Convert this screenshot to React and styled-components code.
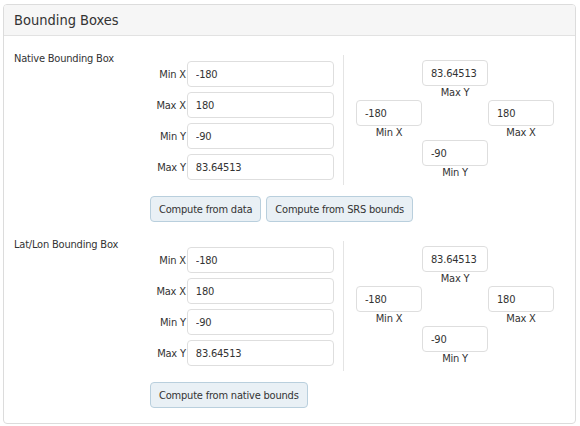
import React from "react";
import styled, { createGlobalStyle } from "styled-components";

const Global = createGlobalStyle`
  body {
    margin: 0;
    background: #fff;
    font-family: Tahoma, "DejaVu Sans Condensed", "DejaVu Sans", sans-serif;
    font-size: 11px;
    letter-spacing: -0.2px;
    color: #333;
  }
`;

const Panel = styled.div`
  margin: 4px 4px 0 3px;
  border: 1px solid #dcdcdc;
  border-radius: 4px;
  overflow: hidden;
`;

const Heading = styled.div`
  height: 30px;
  display: flex;
  align-items: center;
  padding: 0 10px;
  background: #f6f6f6;
  border-bottom: 1px solid #e2e2e2;
  font-size: 14.5px;
  letter-spacing: 0;
  color: #333;
`;

const Body = styled.div`
  padding: 16px 10px 15px 10px;
  display: flex;
  flex-direction: column;
  gap: 16px;
`;

const Section = styled.div`
  display: grid;
  grid-template-columns: 136px 1fr;
`;

const SectionTitle = styled.div`
  line-height: 14px;
`;

const Content = styled.div`
  padding-top: 3px;
`;

const Row = styled.div`
  display: flex;
  align-items: stretch;
`;

const Fields = styled.div`
  width: 184px;
  padding: 6px 0 5px;
  display: flex;
  flex-direction: column;
  gap: 5px;
`;

const Field = styled.label`
  display: flex;
  align-items: center;
  span {
    width: 36px;
    text-align: right;
    padding-right: 1px;
  }
`;

const Input = styled.input`
  box-sizing: border-box;
  height: 26px;
  width: ${(p) => p.$w || 148}px;
  border: 1px solid #dedede;
  border-radius: 4px;
  padding: 0 8px;
  font: inherit;
  letter-spacing: inherit;
  color: #333;
  outline: none;
`;

const Divider = styled.div`
  width: 1px;
  background: #e4e4e4;
  margin: 0 12px 0 9px;
`;

const Compass = styled.div`
  padding-top: 5px;
  display: grid;
  grid-template-columns: repeat(3, 66px);
  grid-template-rows: repeat(3, 40px);
  grid-template-areas:
    ". top ."
    "left . right"
    ". bottom .";
`;

const Cell = styled.div`
  grid-area: ${(p) => p.$area};
  display: flex;
  flex-direction: column;
  align-items: center;
  span {
    line-height: 14px;
  }
`;

const Buttons = styled.div`
  display: flex;
  gap: 5px;
  margin-top: 11px;
`;

const Button = styled.button`
  height: 26px;
  padding: 0 8px;
  font: inherit;
  letter-spacing: inherit;
  color: #333;
  background: #e9f0f5;
  border: 1px solid #b9cfdd;
  border-radius: 4px;
`;

const BoxEditor = ({ title, box, actions }) => (
  <Section>
    <SectionTitle>{title}</SectionTitle>
    <Content>
      <Row>
        <Fields>
          {[
            ["Min X", box.minx],
            ["Max X", box.maxx],
            ["Min Y", box.miny],
            ["Max Y", box.maxy],
          ].map(([label, value]) => (
            <Field key={label}>
              <span>{label}</span>
              <Input defaultValue={value} />
            </Field>
          ))}
        </Fields>
        <Divider />
        <Compass>
          <Cell $area="top">
            <Input $w={66} defaultValue={box.maxy} />
            <span>Max Y</span>
          </Cell>
          <Cell $area="left">
            <Input $w={66} defaultValue={box.minx} />
            <span>Min X</span>
          </Cell>
          <Cell $area="right">
            <Input $w={66} defaultValue={box.maxx} />
            <span>Max X</span>
          </Cell>
          <Cell $area="bottom">
            <Input $w={66} defaultValue={box.miny} />
            <span>Min Y</span>
          </Cell>
        </Compass>
      </Row>
      <Buttons>
        {actions.map((a) => (
          <Button key={a}>{a}</Button>
        ))}
      </Buttons>
    </Content>
  </Section>
);

const bounds = { minx: "-180", maxx: "180", miny: "-90", maxy: "83.64513" };

export default function App() {
  return (
    <>
      <Global />
      <Panel>
        <Heading>Bounding Boxes</Heading>
        <Body>
          <BoxEditor
            title="Native Bounding Box"
            box={bounds}
            actions={["Compute from data", "Compute from SRS bounds"]}
          />
          <BoxEditor
            title="Lat/Lon Bounding Box"
            box={bounds}
            actions={["Compute from native bounds"]}
          />
        </Body>
      </Panel>
    </>
  );
}
